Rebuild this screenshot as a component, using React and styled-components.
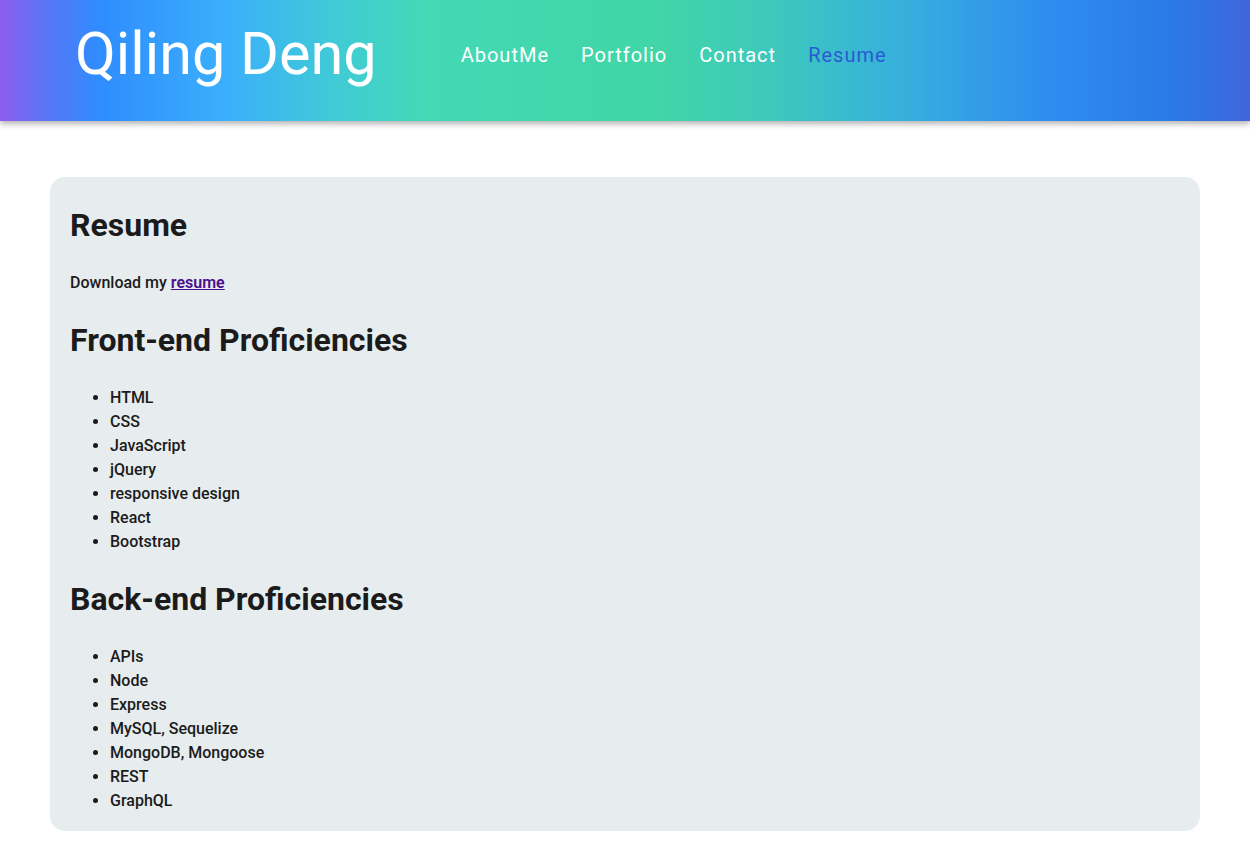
import React from "react";
import styled, { createGlobalStyle } from "styled-components";

const GlobalStyle = createGlobalStyle`
  body {
    margin: 0;
    background: #fff;
    font-family: Roboto, "Liberation Sans", sans-serif;
    line-height: 1.5;
  }
`;

const Header = styled.header`
  height: 121px;
  box-sizing: border-box;
  padding: 0 0 12px 75px;
  display: flex;
  align-items: center;
  background: linear-gradient(
    90deg,
    #8f5ded 0%,
    #5577f5 4%,
    #2f8dff 8%,
    #3aaffb 18%,
    #40cbd6 27%,
    #43d9b5 34%,
    #41d6a6 52%,
    #3dc8bd 62%,
    #37b0dc 72%,
    #2e8cf0 84%,
    #2a79e6 94%,
    #3f66db 100%
  );
  box-shadow: 0 3px 6px rgba(0, 0, 0, 0.3);
  position: relative;
`;

const Brand = styled.h1`
  margin: 0;
  font-size: 59.4px;
  font-weight: 400;
  line-height: 1.2;
  color: #fff;
`;

const Nav = styled.nav`
  display: flex;
  gap: 32px;
  margin-left: 84px;
`;

const NavLink = styled.a`
  font-size: 20px;
  letter-spacing: 1px;
  text-decoration: none;
  color: ${(p) => (p.$active ? "#2a5bd0" : "#fff")};
  cursor: pointer;
`;

const Main = styled.main`
  padding: 56px 0 40px;
`;

const Card = styled.section`
  width: 92%;
  margin: 0 auto;
  box-sizing: border-box;
  background: #e7edee;
  border-radius: 15px;
  padding: 3px 20px 2px;
  color: #1b1b1b;
`;

const Title = styled.h2`
  font-size: 32px;
  font-weight: 700;
  margin: 21px 0 22px;
`;

const Text = styled.p`
  font-size: 16px;
  font-weight: 500;
  margin: 0;
`;

const Link = styled.a`
  color: #4b0f8c;
  font-weight: 600;
`;

const List = styled.ul`
  margin: 16px 0;
  padding-left: 40px;
  font-size: 16px;
  font-weight: 500;
  line-height: 24px;
`;

const frontEnd = [
  "HTML",
  "CSS",
  "JavaScript",
  "jQuery",
  "responsive design",
  "React",
  "Bootstrap",
];

const backEnd = [
  "APIs",
  "Node",
  "Express",
  "MySQL, Sequelize",
  "MongoDB, Mongoose",
  "REST",
  "GraphQL",
];

export default function App() {
  return (
    <>
      <GlobalStyle />
      <Header>
        <Brand>Qiling Deng</Brand>
        <Nav>
          <NavLink>AboutMe</NavLink>
          <NavLink>Portfolio</NavLink>
          <NavLink>Contact</NavLink>
          <NavLink $active>Resume</NavLink>
        </Nav>
      </Header>
      <Main>
        <Card>
          <Title>Resume</Title>
          <Text>
            Download my <Link href="#">resume</Link>
          </Text>
          <Title>Front-end Proficiencies</Title>
          <List>
            {frontEnd.map((item) => (
              <li key={item}>{item}</li>
            ))}
          </List>
          <Title>Back-end Proficiencies</Title>
          <List>
            {backEnd.map((item) => (
              <li key={item}>{item}</li>
            ))}
          </List>
        </Card>
      </Main>
    </>
  );
}
